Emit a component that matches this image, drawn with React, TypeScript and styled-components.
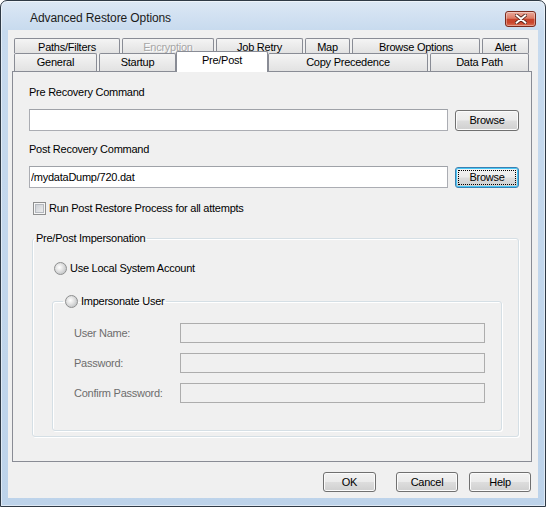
import React from 'react';
import styled, { createGlobalStyle, css } from 'styled-components';

const GlobalStyle = createGlobalStyle`
  html, body {
    margin: 0;
    padding: 0;
    background: #ffffff;
  }
  body {
    font-family: "Liberation Sans", Arial, sans-serif;
    font-size: 11px;
    letter-spacing: -0.25px;
    color: #000;
  }
`;

type TabDef = { label: string; w: number; disabled?: boolean; active?: boolean };

// two rows of tabs, the front row touches the page
const backTabs: TabDef[] = [
  { label: 'Paths/Filters', w: 106 },
  { label: 'Encryption', w: 92, disabled: true },
  { label: 'Job Retry', w: 87 },
  { label: 'Map', w: 45 },
  { label: 'Browse Options', w: 128 },
  { label: 'Alert', w: 47 },
];

const frontTabs: TabDef[] = [
  { label: 'General', w: 83 },
  { label: 'Startup', w: 77 },
  { label: 'Pre/Post', w: 88, active: true },
  { label: 'Copy Precedence', w: 160 },
  { label: 'Data Path', w: 99 },
];

const credentials = ['User Name:', 'Password:', 'Confirm Password:'];

const App: React.FC = () => {
  return (
    <>
      <GlobalStyle />
      <Window>
        <TitleBar>
          <Title>Advanced Restore Options</Title>
          <CloseButton aria-label="Close">
            <svg width="12" height="10" viewBox="0 0 12 10">
              <path d="M1.5 1.2 L10.5 8.8 M10.5 1.2 L1.5 8.8" stroke="#4b1b12" strokeWidth="3.6" strokeLinecap="round" />
              <path d="M1.5 1.2 L10.5 8.8 M10.5 1.2 L1.5 8.8" stroke="#ffffff" strokeWidth="2" strokeLinecap="round" />
            </svg>
          </CloseButton>
        </TitleBar>

        <Body>
          <TabRow $h={15}>
            {backTabs.map((t) => (
              <Tab key={t.label} $w={t.w} $back $disabled={t.disabled}>
                {t.label}
              </Tab>
            ))}
          </TabRow>
          <TabRow $h={18}>
            {frontTabs.map((t) => (
              <Tab key={t.label} $w={t.w} $active={t.active}>
                {t.label}
              </Tab>
            ))}
          </TabRow>

          <Panel>
            <FieldLabel>Pre Recovery Command</FieldLabel>
            <InputRow>
              <TextBox readOnly defaultValue="" />
              <Button $w={64} $h={21}>Browse</Button>
            </InputRow>

            <FieldLabel $top={11}>Post Recovery Command</FieldLabel>
            <InputRow>
              <TextBox readOnly defaultValue="/mydataDump/720.dat" />
              <Button $w={64} $h={21} $focused>Browse</Button>
            </InputRow>

            <CheckRow>
              <CheckBox />
              <span>Run Post Restore Process for all attempts</span>
            </CheckRow>

            <Group>
              <GroupTitle>Pre/Post Impersonation</GroupTitle>
              <GroupBody>
                <RadioRow>
                  <Radio />
                  <span>Use Local System Account</span>
                </RadioRow>

                <SubGroup>
                  <RadioLegend>
                    <Radio />
                    <span>Impersonate User</span>
                  </RadioLegend>
                  <CredentialGrid>
                    {credentials.map((c) => (
                      <React.Fragment key={c}>
                        <MutedLabel>{c}</MutedLabel>
                        <DisabledBox />
                      </React.Fragment>
                    ))}
                  </CredentialGrid>
                </SubGroup>
              </GroupBody>
            </Group>
          </Panel>

          <ButtonBar>
            <Button $w={53} $h={20} $gap={20}>OK</Button>
            <Button $w={62} $h={20} $gap={11}>Cancel</Button>
            <Button $w={62} $h={20}>Help</Button>
          </ButtonBar>
        </Body>
      </Window>
    </>
  );
};

export default App;

const Window = styled.div`
  box-sizing: border-box;
  width: 546px;
  height: 507px;
  display: flex;
  flex-direction: column;
  padding: 0 7px 8px;
  border: 1px solid #2f3a46;
  border-radius: 7px 7px 0 0;
  background: linear-gradient(#dce8f5 0, #c7daee 30px, #bdd3ea 100%);
  box-shadow: inset 0 0 0 1px rgba(255, 255, 255, 0.5);
`;

const TitleBar = styled.div`
  height: 29px;
  display: flex;
  align-items: flex-start;
  justify-content: space-between;
  padding: 0 2px 0 22px;
`;

const Title = styled.span`
  margin-top: 10px;
  font-size: 12px;
  line-height: 15px;
  letter-spacing: -0.1px;
  color: #1b1b1b;
`;

const CloseButton = styled.div`
  box-sizing: border-box;
  width: 31px;
  height: 16px;
  margin-top: 10px;
  display: flex;
  align-items: center;
  justify-content: center;
  border: 1px solid #7a2a1d;
  border-radius: 3px;
  background: linear-gradient(#eaa99b 0%, #dc7b65 45%, #c8432b 52%, #c9462d 75%, #dc7055 100%);
  box-shadow: inset 0 0 0 1px rgba(255, 255, 255, 0.35);
`;

const Body = styled.div`
  flex: 1;
  display: flex;
  flex-direction: column;
  padding: 8px 6px 6px 4px;
  background: #f0f0f0;
`;

const TabRow = styled.div<{ $h: number }>`
  display: flex;
  gap: 2px;
  height: ${(p) => p.$h}px;
  padding: 0 3px 0 2px;
`;

const Tab = styled.div<{ $w: number; $back?: boolean; $active?: boolean; $disabled?: boolean }>`
  box-sizing: border-box;
  flex: none;
  width: ${(p) => p.$w}px;
  height: 100%;
  border: 1px solid #898c95;
  border-bottom: none;
  border-radius: 2px 2px 0 0;
  background: linear-gradient(#f4f4f4, #e2e2e2);
  color: ${(p) => (p.$disabled ? '#a6a6a6' : '#000')};
  text-shadow: ${(p) => (p.$disabled ? '1px 1px 0 #fff' : 'none')};
  text-align: center;
  white-space: nowrap;
  line-height: ${(p) => (p.$back ? '14px' : '17px')};
  padding-top: ${(p) => (p.$back ? '1px' : '0')};

  ${(p) =>
    p.$active &&
    css`
      position: relative;
      z-index: 1;
      width: ${p.$w + 4}px;
      height: calc(100% + 3px);
      margin: -2px -2px -1px;
      background: #ffffff;
    `}
`;

const Panel = styled.div`
  box-sizing: border-box;
  height: 391px;
  display: flex;
  flex-direction: column;
  padding: 13px 12px 0 16px;
  border: 1px solid #898c95;
  background: #f0f0f0;
`;

const FieldLabel = styled.div<{ $top?: number }>`
  line-height: 15px;
  margin: ${(p) => p.$top ?? 0}px 0 9px;
`;

const InputRow = styled.div`
  display: flex;
  align-items: center;
  gap: 7px;
`;

const TextBox = styled.input`
  box-sizing: border-box;
  flex: 1;
  min-width: 0;
  height: 22px;
  margin: 0;
  padding: 0 1px;
  border: 1px solid #abadb3;
  border-top-color: #9fa2a8;
  background: #ffffff;
  font: inherit;
  letter-spacing: inherit;
  color: #000;
  outline: none;
`;

const Button = styled.button<{ $w: number; $h: number; $gap?: number; $focused?: boolean }>`
  box-sizing: border-box;
  flex: none;
  width: ${(p) => p.$w}px;
  height: ${(p) => p.$h}px;
  margin: 0 ${(p) => p.$gap ?? 0}px 0 0;
  padding: 0;
  border: 1px solid ${(p) => (p.$focused ? '#3c7fb1' : '#707070')};
  border-radius: 3px;
  background: linear-gradient(#f2f2f2 0%, #ebebeb 48%, #dddddd 52%, #cfcfcf 100%);
  box-shadow: inset 0 0 0 1px ${(p) => (p.$focused ? '#48c8f6' : '#fbfbfb')};
  font: inherit;
  letter-spacing: inherit;
  color: #000;
  outline: ${(p) => (p.$focused ? '1px dotted #000' : 'none')};
  outline-offset: -4px;
`;

const CheckRow = styled.label`
  display: flex;
  align-items: center;
  gap: 3px;
  margin: 13px 0 0 4px;
  line-height: 15px;
`;

const CheckBox = styled.span`
  box-sizing: border-box;
  width: 13px;
  height: 13px;
  border: 1px solid #8e8f8f;
  background: linear-gradient(135deg, #c4c8ce, #f4f4f4);
  box-shadow: inset 0 0 0 1px #f6f6f6, inset 0 0 0 2px #b5b9bf;
`;

const Radio = styled.span`
  box-sizing: border-box;
  flex: none;
  width: 13px;
  height: 13px;
  border: 1px solid #8e8f8f;
  border-radius: 50%;
  background: radial-gradient(circle at 40% 40%, #ffffff 0%, #e6e6e6 35%, #c9cbcd 70%, #f1f1f1 100%);
`;

const Group = styled.fieldset`
  min-width: 0;
  margin: 15px 0 0 3px;
  padding: 0;
  border: 1px solid #d5dfe5;
  border-radius: 3px;
  box-shadow: inset 1px 1px 0 #ffffff, 1px 1px 0 #ffffff;
`;

const GroupTitle = styled.legend`
  margin-left: 1px;
  padding: 0 2px;
  line-height: 15px;
`;

const GroupBody = styled.div`
  padding: 15px 16px 5px 19px;
`;

const RadioRow = styled.label`
  display: flex;
  align-items: center;
  gap: 3px;
  margin-left: 2px;
  line-height: 15px;
`;

const SubGroup = styled.fieldset`
  min-width: 0;
  margin: 18px 0 0;
  padding: 0 16px 27px 21px;
  border: 1px solid #d5dfe5;
  border-radius: 3px;
  box-shadow: inset 1px 1px 0 #ffffff, 1px 1px 0 #ffffff;
`;

const RadioLegend = styled.legend`
  display: flex;
  align-items: center;
  gap: 3px;
  margin-left: -11px;
  padding: 0 2px;
  line-height: 15px;
`;

const CredentialGrid = styled.div`
  display: grid;
  grid-template-columns: 106px 305px;
  grid-auto-rows: 20px;
  row-gap: 10px;
  align-items: center;
  margin-top: 14px;
`;

const MutedLabel = styled.span`
  color: #6d6d6d;
`;

const DisabledBox = styled.div`
  box-sizing: border-box;
  height: 20px;
  border: 1px solid #adadad;
  background: #f0f0f0;
`;

const ButtonBar = styled.div`
  display: flex;
  justify-content: flex-end;
  margin-top: 10px;
  padding-right: 1px;
`;
